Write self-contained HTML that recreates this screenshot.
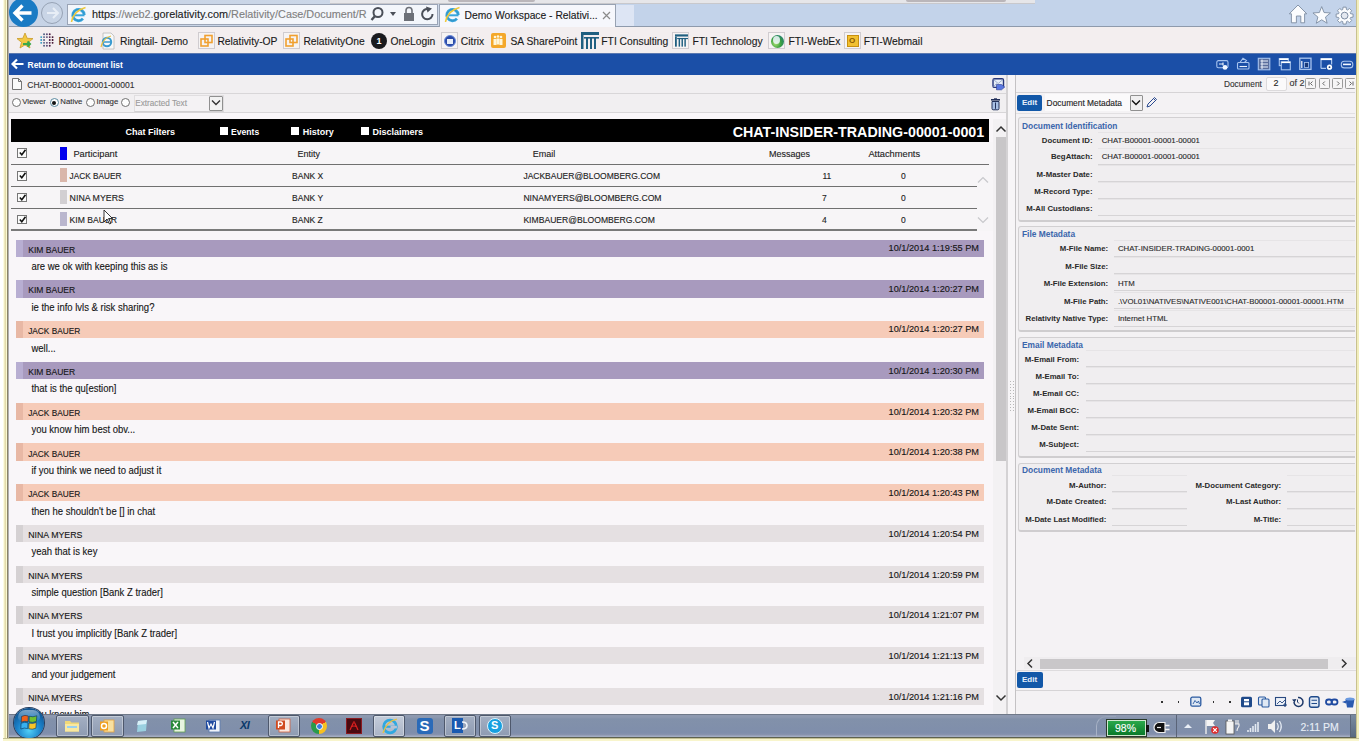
<!DOCTYPE html>
<html><head><meta charset="utf-8">
<style>
*{box-sizing:border-box;margin:0;padding:0}
html,body{width:1366px;height:743px;overflow:hidden;background:#fff}
body{position:relative;font-family:"Liberation Sans",sans-serif;color:#222}
.a{position:absolute}
.t{position:absolute;white-space:nowrap;line-height:1;-webkit-text-stroke:0.12px currentColor}
.t[style*="bold"]{-webkit-text-stroke:0}
.sy .t{transform:translateY(-0.4px) scaleY(1.07);transform-origin:50% 48%}
/* window borders */
#bl1{left:3px;top:0;width:1px;height:740px;background:#fdfce2}
#bl2{left:4px;top:0;width:1px;height:740px;background:#eee8c0}
#bl3{left:5px;top:0;width:1px;height:740px;background:#e2dbaa}
#bl4{left:6px;top:0;width:1px;height:740px;background:#fbfad4}
#bl5{left:7px;top:0;width:1px;height:739px;background:#8a8268}
#bl6{left:8px;top:0;width:1px;height:739px;background:#b0b0b0}
#br1{left:1356px;top:0;width:1px;height:740px;background:#c8c090}
#br2{left:1357px;top:0;width:2px;height:740px;background:#f2eebc}
#bb1{left:3px;top:738px;width:1356px;height:1px;background:#c4c094}
#bb2{left:3px;top:739px;width:1356px;height:2px;background:#f8f5cc}
#scr{left:0;top:0;width:1356px;height:738px;overflow:hidden;clip-path:inset(0 0 0 9px);background:#f9f6f9}
</style></head><body>
<div id="bl1" class="a"></div><div id="bl2" class="a"></div><div id="bl3" class="a"></div><div id="bl4" class="a"></div><div id="bl5" class="a"></div><div id="bl6" class="a"></div>
<div id="br1" class="a"></div><div id="br2" class="a"></div>
<div id="bb1" class="a"></div><div id="bb2" class="a"></div>
<div id="scr" class="a">

<!-- top strip & toolbar -->
<div class="a" style="left:0;top:0;width:1356px;height:26px;background:#c3d3ea"></div>
<div class="a" style="left:0;top:0;width:440px;height:26px;background:linear-gradient(90deg,#c6d3e6,#cdd8e8)"></div>
<div class="a" style="left:330px;top:0;width:705px;height:4px;background:#e6e6e9;border-bottom:1px solid #c8c8cc"></div>
<div class="a" style="left:447.6px;top:0;width:87px;height:1.8px;background:#bab6ba;border-radius:0 0 2px 2px"></div>
<div class="a" style="left:905.7px;top:0;width:100px;height:1.8px;background:#bab6ba;border-radius:0 0 2px 2px"></div>
<div class="a" style="left:0;top:26px;width:1356px;height:1px;background:#8e9aac"></div>
<!-- back button -->
<div class="a" style="left:9px;top:-2px;width:29px;height:29px;border-radius:50%;background:#1a7bc4"></div>
<svg class="a" style="left:12px;top:3px" width="22" height="20" viewBox="0 0 22 20"><path d="M10.5 2.5 L3 10 L10.5 17.5 M3.5 10 H19.5" stroke="#fff" stroke-width="3.4" fill="none" stroke-linejoin="miter"/></svg>
<!-- forward button -->
<div class="a" style="left:41px;top:2px;width:22px;height:22px;border-radius:50%;border:1px solid #97a3b5;background:#c9d5e6"></div>
<svg class="a" style="left:45px;top:6px" width="15" height="14" viewBox="0 0 15 14"><path d="M8 2 L13 7 L8 12 M13 7 H2" stroke="#e8eef6" stroke-width="2" fill="none"/></svg>
<!-- address bar -->
<div class="a" style="left:67px;top:4px;width:371px;height:21px;background:#f3f6fb;border:1px solid #9aa4b6"></div>
<div class="t" style="left:92px;top:9px;font-size:10.85px;color:#808080"><span style="color:#222">https</span>://web2.<span style="color:#222">gorelativity.com</span>/Relativity/Case/Document/R</div>

<!-- IE icon in address -->
<svg class="a" style="left:70px;top:6px" width="17" height="17" viewBox="0 0 17 17"><path d="M14.2 9 A5.7 5.7 0 1 0 12.9 12.7" fill="none" stroke="#3aa6dc" stroke-width="2.9"/><path d="M14.2 9 A5.7 5.7 0 1 0 12.9 12.7" fill="none" stroke="#1f6a98" stroke-width="0.5" opacity="0.6"/><path d="M3.5 9.3 H14.5" stroke="#3aa6dc" stroke-width="2"/><path d="M1.5 16 Q3 5 15.5 1.5" stroke="#f0c838" stroke-width="1.5" fill="none"/></svg>
<!-- search / lock / refresh -->
<svg class="a" style="left:370px;top:6px" width="66" height="16" viewBox="0 0 66 16"><circle cx="8" cy="6.5" r="4.5" fill="none" stroke="#4a4f58" stroke-width="2"/><path d="M5 10 L1.5 14" stroke="#4a4f58" stroke-width="2.4"/><path d="M20 6 L26 6 L23 10 Z" fill="#4a4f58"/><rect x="34" y="7" width="10" height="8" fill="#6c7078"/><path d="M36 7.5 V4.5 A3 3 0 0 1 42 4.5 V7.5" fill="none" stroke="#6c7078" stroke-width="1.6"/><path d="M58 3 A5.2 5.2 0 1 0 62.5 8" fill="none" stroke="#4a4f58" stroke-width="2"/><path d="M56 0.5 L62 2.5 L57.5 6.5 Z" fill="#4a4f58"/></svg>
<!-- tab -->
<div class="a" style="left:439px;top:4px;width:177px;height:23px;background:#f6f7fc;border:1px solid #98a2b2;border-bottom:none"></div>
<div class="a" style="left:616px;top:5px;width:18px;height:21px;background:#dde5f4"></div>
<svg class="a" style="left:444px;top:6px" width="17" height="17" viewBox="0 0 17 17"><path d="M14.2 9 A5.7 5.7 0 1 0 12.9 12.7" fill="none" stroke="#3aa6dc" stroke-width="2.9"/><path d="M14.2 9 A5.7 5.7 0 1 0 12.9 12.7" fill="none" stroke="#1f6a98" stroke-width="0.5" opacity="0.6"/><path d="M3.5 9.3 H14.5" stroke="#3aa6dc" stroke-width="2"/><path d="M1.5 16 Q3 5 15.5 1.5" stroke="#f0c838" stroke-width="1.5" fill="none"/></svg>
<div class="t" style="left:464.6px;top:10.5px;font-size:10.3px;color:#1a1a1a">Demo Workspace - Relativi...</div>
<svg class="a" style="left:602px;top:11px" width="9" height="9" viewBox="0 0 9 9"><path d="M1 1 L8 8 M8 1 L1 8" stroke="#8a8a8a" stroke-width="1.2"/></svg>
<!-- home star gear -->
<svg class="a" style="left:1286px;top:2px" width="70" height="24" viewBox="0 0 70 24"><path d="M3.3 11.8 L12 3 L20.8 11.8 L18.6 11.8 V20.8 H14.8 V14 H10.4 V20.8 H5.4 V11.8 Z" fill="#fbfcfe" stroke="#7d8ca2" stroke-width="0.9" stroke-linejoin="round"/><path d="M35.70,4.60 L38.05,10.56 L44.45,10.96 L39.50,15.04 L41.11,21.24 L35.70,17.80 L30.29,21.24 L31.90,15.04 L26.95,10.96 L33.35,10.56 Z" fill="#fbfcfe" stroke="#7d8ca2" stroke-width="0.9" stroke-linejoin="round"/><path d="M64.62,11.74 L67.06,12.06 L67.06,15.14 L64.62,15.46 L64.17,16.54 L65.67,18.49 L63.49,20.67 L61.54,19.17 L60.46,19.62 L60.14,22.06 L57.06,22.06 L56.74,19.62 L55.66,19.17 L53.71,20.67 L51.53,18.49 L53.03,16.54 L52.58,15.46 L50.14,15.14 L50.14,12.06 L52.58,11.74 L53.03,10.66 L51.53,8.71 L53.71,6.53 L55.66,8.03 L56.74,7.58 L57.06,5.14 L60.14,5.14 L60.46,7.58 L61.54,8.03 L63.49,6.53 L65.67,8.71 L64.17,10.66 Z" fill="#fbfcfe" stroke="#7d8ca2" stroke-width="0.9" stroke-linejoin="round"/><circle cx="58.6" cy="13.6" r="3.4" fill="#e4e8f0" stroke="#7d8ca2" stroke-width="1"/></svg>
<!-- bookmarks bar -->
<div class="a" style="left:0;top:27px;width:1356px;height:26px;background:#f3eeef"></div>
<svg class="a" style="left:16px;top:32px" width="18" height="18" viewBox="0 0 18 18"><path d="M9 1 L11.2 6.3 L17 6.6 L12.5 10.3 L14 16 L9 12.9 L4 16 L5.5 10.3 L1 6.6 L6.8 6.3 Z" fill="#f2c842" stroke="#c99a2a" stroke-width="0.8"/><path d="M7 12 H14 M11.5 9.5 L14 12 L11.5 14.5" stroke="#3aa84a" stroke-width="2" fill="none"/></svg>
<svg class="a" style="left:40px;top:33.4px" width="14" height="14" viewBox="0 0 14 14"><circle cx="4.05" cy="1.20" r="0.95" fill="#4a5a80"/><circle cx="6.90" cy="1.20" r="0.95" fill="#5a4a78"/><circle cx="9.75" cy="1.20" r="0.95" fill="#4a1a40"/><circle cx="1.20" cy="4.08" r="0.95" fill="#2a98c0"/><circle cx="4.05" cy="4.08" r="0.95" fill="#4a5a80"/><circle cx="6.90" cy="4.08" r="0.95" fill="#5a4a78"/><circle cx="9.75" cy="4.08" r="0.95" fill="#4a1a40"/><circle cx="12.60" cy="4.08" r="0.95" fill="#3a0a28"/><circle cx="1.20" cy="6.96" r="0.95" fill="#2a98c0"/><circle cx="4.05" cy="6.96" r="0.95" fill="#4a5a80"/><circle cx="9.75" cy="6.96" r="0.95" fill="#4a1a40"/><circle cx="12.60" cy="6.96" r="0.95" fill="#3a0a28"/><circle cx="1.20" cy="9.84" r="0.95" fill="#2a98c0"/><circle cx="4.05" cy="9.84" r="0.95" fill="#4a5a80"/><circle cx="6.90" cy="9.84" r="0.95" fill="#5a4a78"/><circle cx="9.75" cy="9.84" r="0.95" fill="#4a1a40"/><circle cx="12.60" cy="9.84" r="0.95" fill="#3a0a28"/><circle cx="4.05" cy="12.72" r="0.95" fill="#4a5a80"/><circle cx="6.90" cy="12.72" r="0.95" fill="#5a4a78"/><circle cx="9.75" cy="12.72" r="0.95" fill="#4a1a40"/></svg>
<div class="t" style="left:58.5px;top:36.5px;font-size:10.3px;color:#1a1a1a">Ringtail</div>
<svg class="a" style="left:99px;top:32px" width="17" height="18" viewBox="0 0 17 18"><path d="M4 1 H12 L15 4 V17 H4 Z" fill="#f8f8f8" stroke="#b8b8b8" stroke-width="0.8"/><circle cx="8" cy="10" r="4.2" fill="none" stroke="#3a9ad0" stroke-width="2"/><path d="M4 10 H12" stroke="#3a9ad0" stroke-width="1.5"/><path d="M2 15 Q4 6 12 4" stroke="#e8c040" stroke-width="1.2" fill="none"/></svg>
<div class="t" style="left:120px;top:36.5px;font-size:10.3px;color:#1a1a1a">Ringtail- Demo</div>
<div class="a" style="left:197.5px;top:32px;width:17px;height:17px;border:1px solid #d0ccd0;background:#f6f3f3"></div>
<svg class="a" style="left:198.5px;top:33px" width="16" height="16" viewBox="0 0 16 16"><rect x="2" y="6" width="7" height="7" fill="none" stroke="#f0a030" stroke-width="1.6"/><rect x="6" y="2.5" width="7" height="7" fill="none" stroke="#f0a030" stroke-width="1.6"/></svg>
<div class="t" style="left:217.4px;top:36.5px;font-size:10.3px;color:#1a1a1a">Relativity-OP</div>
<div class="a" style="left:283px;top:32px;width:17px;height:17px;border:1px solid #d0ccd0;background:#f6f3f3"></div>
<svg class="a" style="left:284px;top:33px" width="16" height="16" viewBox="0 0 16 16"><rect x="2" y="6" width="7" height="7" fill="none" stroke="#f0a030" stroke-width="1.6"/><rect x="6" y="2.5" width="7" height="7" fill="none" stroke="#f0a030" stroke-width="1.6"/></svg>
<div class="t" style="left:303.4px;top:36.5px;font-size:10.3px;color:#1a1a1a">RelativityOne</div>
<div class="a" style="left:371px;top:33px;width:16px;height:16px;border-radius:50%;background:#1a1a1e"></div><div class="t" style="left:376.5px;top:37px;font-size:9px;font-weight:bold;color:#fff">1</div>
<div class="t" style="left:390.5px;top:36.5px;font-size:10.3px;color:#1a1a1a">OneLogin</div>
<div class="a" style="left:441px;top:32px;width:17px;height:17px;border:1px solid #d0ccd0;background:#f6f3f3"></div>
<div class="a" style="left:443.5px;top:35px;width:12px;height:12px;border-radius:50%;background:#2a4aa8;border:1px solid #6a8ad8"></div><div class="a" style="left:446.5px;top:38.5px;width:6px;height:5px;background:#e8eef8"></div>
<div class="t" style="left:460.8px;top:36.5px;font-size:10.3px;color:#1a1a1a">Citrix</div>
<div class="a" style="left:490.5px;top:32.5px;width:15px;height:15px;border-radius:2px;background:#f4a82a"></div><svg class="a" style="left:492px;top:34px" width="12" height="12" viewBox="0 0 12 12"><circle cx="3" cy="3" r="1.3" fill="#fff6d8"/><circle cx="9" cy="3" r="1.3" fill="#fff6d8"/><circle cx="6" cy="2.5" r="1.3" fill="#fff6d8"/><rect x="1.5" y="5" width="3" height="6" fill="#fff6d8"/><rect x="7.5" y="5" width="3" height="6" fill="#fff6d8"/><rect x="4.5" y="4.5" width="3" height="6" fill="#fff6d8"/></svg>
<div class="t" style="left:510.4px;top:36.5px;font-size:10.3px;color:#1a1a1a">SA SharePoint</div>
<svg class="a" style="left:581.4px;top:32px" width="18" height="17" viewBox="0 0 18 17"><rect x="0" y="0" width="18" height="3" fill="#1f5f80"/><rect x="0" y="3" width="2.5" height="14" fill="#1f5f80"/><rect x="5" y="5" width="2" height="12" fill="#1f5f80"/><rect x="9" y="5" width="2" height="12" fill="#1f5f80"/><rect x="13" y="5" width="2" height="12" fill="#1f5f80"/><rect x="3" y="5" width="15" height="1.6" fill="#1f5f80"/></svg>
<div class="t" style="left:601.3px;top:36.5px;font-size:10.3px;color:#1a1a1a">FTI Consulting</div>
<div class="a" style="left:672px;top:32px;width:17px;height:17px;border:1px solid #d0ccd0;background:#f6f3f3"></div>
<svg class="a" style="left:674.5px;top:32px" width="13" height="17" viewBox="0 0 18 17"><rect x="0" y="0" width="18" height="3" fill="#1f5f80"/><rect x="0" y="3" width="2.5" height="14" fill="#1f5f80"/><rect x="5" y="5" width="2" height="12" fill="#1f5f80"/><rect x="9" y="5" width="2" height="12" fill="#1f5f80"/><rect x="13" y="5" width="2" height="12" fill="#1f5f80"/><rect x="3" y="5" width="15" height="1.6" fill="#1f5f80"/></svg>
<div class="t" style="left:692.4px;top:36.5px;font-size:10.3px;color:#1a1a1a">FTI Technology</div>
<div class="a" style="left:768px;top:32px;width:17px;height:17px;border:1px solid #d0ccd0;background:#f6f3f3"></div>
<div class="a" style="left:770.5px;top:34.5px;width:13px;height:13px;border-radius:50%;background:radial-gradient(circle at 35% 65%,#a8e070 0,#3aa040 45%,#1a6a8a 100%)"></div><div class="a" style="left:773px;top:36px;width:7px;height:8px;border-radius:50%;background:rgba(240,248,255,0.85)"></div>
<div class="t" style="left:788.5px;top:36.5px;font-size:10.3px;color:#1a1a1a">FTI-WebEx</div>
<div class="a" style="left:844px;top:32px;width:17px;height:17px;border:1px solid #d0ccd0;background:#f6f3f3"></div>
<div class="a" style="left:846.5px;top:34.5px;width:12px;height:12px;background:#f2c030;border:1px solid #c89010"></div><div class="t" style="left:849px;top:36.5px;font-size:8px;font-weight:bold;color:#8a5a00">O</div>
<div class="t" style="left:863.7px;top:36.5px;font-size:10.3px;color:#1a1a1a">FTI-Webmail</div>
<!--CHROME-->

<!-- blue bar -->
<div class="a" style="left:0;top:53px;width:1356px;height:1px;background:#5a78b0"></div>
<div class="a" style="left:0;top:54px;width:1356px;height:21px;background:#1b4fa7"></div>
<svg class="a" style="left:11px;top:58px" width="13" height="12" viewBox="0 0 13 12"><path d="M6 1.5 L1.5 6 L6 10.5 M2 6 H12.5" stroke="#fff" stroke-width="2.2" fill="none"/></svg>
<div class="t" style="left:27.5px;top:61.20px;font-size:8.5px;font-weight:bold;color:#fff">Return to document list</div>
<!-- blue bar icons right -->
<svg class="a" style="left:1210px;top:54px" width="146" height="20" viewBox="0 0 146 20">
<g fill="none" stroke="#a8c4ee" stroke-width="1.1">
<rect x="6.8" y="6.6" width="11.2" height="7.2" rx="1.6"/>
<path d="M9 10 H13 M13 8.5 V11.5" stroke="#e8f0fc" stroke-width="1.2"/>
<circle cx="15" cy="13.4" r="2.4" fill="#f0f6ff" stroke="none"/>
<rect x="27.5" y="8.5" width="11.5" height="6.5" rx="1"/>
<path d="M29.5 12.5 H37" stroke="#e8f0fc"/>
<path d="M30 8.5 L33 4.2 L36.5 6.5 L34.5 8.5" />
<rect x="48.3" y="4.3" width="11.5" height="11.5" fill="#5a6e9c"/>
<path d="M50.5 7 H58 M50.5 10 H58 M50.5 13 H58 M52 5.5 V15" stroke="#eef4fc" stroke-width="1"/>
<rect x="69.3" y="4.6" width="9" height="7"/>
<path d="M69.3 5.2 H78.3" stroke="#ffffff" stroke-width="1.6"/>
<rect x="71.3" y="7.8" width="9" height="8" fill="#1b4fa7"/>
<path d="M71.3 8.4 H80.3" stroke="#ffffff" stroke-width="1.4"/>
<rect x="89.8" y="4.2" width="11.2" height="11.2" stroke-width="1.3"/>
<rect x="94.4" y="8.5" width="4.2" height="5" fill="#1a3a78" stroke="#a8c4ee" stroke-width="0.8"/>
<path d="M91.8 7 V14" stroke="#f4f8ff" stroke-width="1.2"/>
<path d="M111 14.4 V4.8 H121.6 V10.5 M111 14.4 H116" stroke-width="1.2"/>
<path d="M110.8 5.2 H121.8" stroke="#ffffff" stroke-width="1.8"/>
<circle cx="119.5" cy="13.2" r="2.6" fill="#ffffff" stroke="none"/>
<circle cx="119.5" cy="13.2" r="0.9" fill="#1a3a78" stroke="none"/>
<rect x="131.3" y="7.3" width="11.5" height="6.6" rx="3"/>
<path d="M133 10.4 H141" stroke="#f4f8ff" stroke-width="1.6"/>
</g>
</svg>
<!-- left doc row -->
<div class="a" style="left:9px;top:75px;width:998px;height:18px;background:#f1eff1"></div>
<div class="a" style="left:9px;top:93px;width:998px;height:1px;background:#d8d6d8"></div>
<svg class="a" style="left:12px;top:78px" width="10" height="12" viewBox="0 0 10 12"><path d="M0.5 0.5 H6.5 L9.5 3.5 V11.5 H0.5 Z M6.5 0.5 V3.5 H9.5" fill="#fafafa" stroke="#666" stroke-width="0.9"/></svg>
<div class="t" style="left:27.3px;top:80.5px;font-size:8.5px;color:#333">CHAT-B00001-00001-00001</div>
<!-- radio row -->
<div class="a" style="left:9px;top:94px;width:998px;height:19px;background:#f1eff1"></div>
<div class="a" style="left:9px;top:112px;width:998px;height:1px;background:#d8d6d8"></div>
<div class="a" style="left:12px;top:98px;width:9px;height:9px;border-radius:50%;border:1px solid #707070;background:#fdfdfd"></div>
<div class="t" style="left:22.2px;top:97.5px;font-size:7.8px;color:#333">Viewer</div>
<div class="a" style="left:49.5px;top:98px;width:9px;height:9px;border-radius:50%;border:1px solid #5a8aa0;background:#fdfdfd"></div>
<div class="a" style="left:52px;top:100.5px;width:4px;height:4px;border-radius:50%;background:#111"></div>
<div class="t" style="left:60.3px;top:97.5px;font-size:7.8px;color:#333">Native</div>
<div class="a" style="left:85.6px;top:98px;width:9px;height:9px;border-radius:50%;border:1px solid #707070;background:#fdfdfd"></div>
<div class="t" style="left:96.6px;top:97.5px;font-size:7.8px;color:#333">Image</div>
<div class="a" style="left:120.7px;top:98px;width:9px;height:9px;border-radius:50%;border:1px solid #707070;background:#fdfdfd"></div>
<div class="a" style="left:133.5px;top:94.5px;width:90px;height:17.5px;background:#f4f2f4;border:1px solid #e0dee0;border-bottom-color:#d2d0d2"></div>
<div class="t" style="left:135.2px;top:100px;font-size:8.2px;color:#9a9a9a">Extracted Text</div>
<div class="a" style="left:209px;top:95.5px;width:14px;height:15px;border:1px solid #909090;background:#f2f2f2;border-radius:1px"></div>
<svg class="a" style="left:211px;top:99px" width="10" height="7" viewBox="0 0 10 7"><path d="M1 1.5 L5 5.5 L9 1.5" stroke="#333" stroke-width="1.4" fill="none"/></svg>
<!-- left icons -->
<svg class="a" style="left:991px;top:77px" width="15" height="14" viewBox="0 0 15 14"><rect x="2" y="1.8" width="10.5" height="8.6" rx="1.5" fill="#e8eef8" stroke="#26367a" stroke-width="1.4"/><path d="M2.5 2.5 L7.2 6.5 L12 2.5 M2.5 9.8 L5.5 6.5" stroke="#8aa0c0" stroke-width="0.8" fill="none"/><path d="M5.5 7.5 H10.5 L13.8 10 L10.5 12.8 H5.5 Z" fill="#5a78e0" stroke="#2a3a90" stroke-width="0.6"/></svg>
<svg class="a" style="left:990px;top:98px" width="11" height="13" viewBox="0 0 11 13"><path d="M1 1.8 H10" stroke="#22305a" stroke-width="1.6"/><path d="M4 0.8 H7" stroke="#22305a" stroke-width="1"/><path d="M2 3.5 H9 V10.5 Q9 11.8 7.8 11.8 H3.2 Q2 11.8 2 10.5 Z" fill="#a8c0e4" stroke="#22305a" stroke-width="1"/><path d="M5.5 4.5 V10.8" stroke="#22305a" stroke-width="1"/></svg>
<!-- separator between panels -->
<div class="a" style="left:1006px;top:75px;width:2px;height:639px;background:#d4d2d4"></div>
<div class="a" style="left:1008px;top:75px;width:7px;height:639px;background:#f7f5f7"></div>
<div class="a" style="left:1015px;top:75px;width:1px;height:639px;background:#c4c2c4"></div>

<!-- black bar -->
<div class="a" style="left:11px;top:119px;width:978px;height:23px;background:#000"></div>
<div class="t" style="left:125.6px;top:128.30px;font-size:9px;font-weight:bold;color:#fff">Chat Filters</div>
<div class="a" style="left:220px;top:126.6px;width:8px;height:8px;background:#fff"></div>
<div class="t" style="left:231px;top:128.30px;font-size:8.6px;font-weight:bold;color:#fff">Events</div>
<div class="a" style="left:291px;top:126.6px;width:8px;height:8px;background:#fff"></div>
<div class="t" style="left:302.7px;top:128.30px;font-size:9px;font-weight:bold;color:#fff">History</div>
<div class="a" style="left:361px;top:126.6px;width:8px;height:8px;background:#fff"></div>
<div class="t" style="left:372.4px;top:128.30px;font-size:9px;font-weight:bold;color:#fff">Disclaimers</div>
<div class="t" style="left:732.7px;top:124.5px;font-size:14.3px;font-weight:bold;color:#fff">CHAT-INSIDER-TRADING-00001-0001</div>
<!-- table -->
<div class="a" style="left:9px;top:142px;width:984px;height:89px;background:#f7f5f7"></div>
<div class="a" style="left:11px;top:164px;width:978px;height:1.4px;background:#707070"></div>
<div class="a" style="left:11px;top:186px;width:966px;height:1.4px;background:#707070"></div>
<div class="a" style="left:11px;top:207.5px;width:966px;height:1.4px;background:#707070"></div>
<div class="a" style="left:11px;top:229.2px;width:966px;height:1.4px;background:#7a7a7a"></div>
<div class="a" style="left:60px;top:146.5px;width:7.2px;height:13.7px;background:#0000ee"></div>
<div class="a" style="left:60px;top:168.3px;width:7.2px;height:13.5px;background:#d9b6aa"></div>
<div class="a" style="left:60px;top:190.2px;width:7.2px;height:13.5px;background:#d2cfd2"></div>
<div class="a" style="left:60px;top:212px;width:7.2px;height:13.5px;background:#bab6ce"></div>
<div class="t" style="left:73.4px;top:149.7px;font-size:9.3px;color:#222">Participant</div>
<div class="t" style="left:297.4px;top:149.7px;font-size:9px;color:#222">Entity</div>
<div class="t" style="left:532.8px;top:149.7px;font-size:9px;color:#222">Email</div>
<div class="t" style="left:769px;top:149.7px;font-size:9px;color:#222">Messages</div>
<div class="t" style="left:868.4px;top:149.7px;font-size:9.3px;color:#222">Attachments</div>
<div class="a" style="left:17.2px;top:148.3px;width:9.5px;height:9.5px;border:1px solid #777;background:#fbfbfb"></div><svg class="a" style="left:18.7px;top:149.3px" width="7" height="7" viewBox="0 0 7 7"><path d="M0.8 3.5 L2.8 5.8 L6.5 0.8" stroke="#111" stroke-width="1.5" fill="none"/></svg>
<div class="a" style="left:17.2px;top:171.0px;width:9.5px;height:9.5px;border:1px solid #777;background:#fbfbfb"></div><svg class="a" style="left:18.7px;top:172.0px" width="7" height="7" viewBox="0 0 7 7"><path d="M0.8 3.5 L2.8 5.8 L6.5 0.8" stroke="#111" stroke-width="1.5" fill="none"/></svg>
<div class="t" style="left:69.6px;top:172.57px;font-size:8.25px;color:#222">JACK BAUER</div>
<div class="t" style="left:292.1px;top:171.80px;font-size:8.5px;color:#222">BANK X</div>
<div class="t" style="left:523.4px;top:171.80px;font-size:8.5px;color:#222">JACKBAUER@BLOOMBERG.COM</div>
<div class="t" style="left:822.5px;top:171.80px;font-size:8.5px;color:#222">11</div>
<div class="t" style="left:901px;top:171.80px;font-size:8.5px;color:#222">0</div>
<div class="a" style="left:17.2px;top:192.9px;width:9.5px;height:9.5px;border:1px solid #777;background:#fbfbfb"></div><svg class="a" style="left:18.7px;top:193.9px" width="7" height="7" viewBox="0 0 7 7"><path d="M0.8 3.5 L2.8 5.8 L6.5 0.8" stroke="#111" stroke-width="1.5" fill="none"/></svg>
<div class="t" style="left:69.6px;top:194.21px;font-size:8.8px;color:#222">NINA MYERS</div>
<div class="t" style="left:292.1px;top:194.40px;font-size:8.5px;color:#222">BANK Y</div>
<div class="t" style="left:523.4px;top:194.40px;font-size:8.65px;color:#222">NINAMYERS@BLOOMBERG.COM</div>
<div class="t" style="left:822px;top:194.40px;font-size:8.5px;color:#222">7</div>
<div class="t" style="left:901px;top:194.40px;font-size:8.5px;color:#222">0</div>
<div class="a" style="left:17.2px;top:214.79999999999998px;width:9.5px;height:9.5px;border:1px solid #777;background:#fbfbfb"></div><svg class="a" style="left:18.7px;top:215.79999999999998px" width="7" height="7" viewBox="0 0 7 7"><path d="M0.8 3.5 L2.8 5.8 L6.5 0.8" stroke="#111" stroke-width="1.5" fill="none"/></svg>
<div class="t" style="left:69.6px;top:215.90px;font-size:8.6px;color:#222">KIM BAUER</div>
<div class="t" style="left:292.1px;top:216.00px;font-size:8.5px;color:#222">BANK Z</div>
<div class="t" style="left:523.4px;top:216.00px;font-size:8.6px;color:#222">KIMBAUER@BLOOMBERG.COM</div>
<div class="t" style="left:822px;top:216.00px;font-size:8.5px;color:#222">4</div>
<div class="t" style="left:901px;top:216.00px;font-size:8.5px;color:#222">0</div>
<svg class="a" style="left:977px;top:176px" width="12" height="8" viewBox="0 0 12 8"><path d="M1 6.5 L6 1.5 L11 6.5" stroke="#c8c8cc" stroke-width="1.2" fill="none"/></svg>
<svg class="a" style="left:977px;top:216px" width="12" height="8" viewBox="0 0 12 8"><path d="M1 1.5 L6 6.5 L11 1.5" stroke="#c8c8cc" stroke-width="1.2" fill="none"/></svg>
<svg class="a" style="left:103px;top:208.5px" width="10" height="16" viewBox="0 0 10 16"><path d="M1 1 V13 L4 10 L6.5 15 L8 14.3 L5.5 9.5 H9.5 Z" fill="#fff" stroke="#222" stroke-width="0.9"/></svg>
<!-- chat -->
<div class="a sy" style="left:9px;top:231px;width:984px;height:483px;background:#f9f6f9;overflow:hidden">
<div class="a" style="left:7px;top:8.50px;width:968px;height:17.4px;background:#a89abe"></div><div class="a" style="left:7px;top:8.50px;width:7px;height:17.4px;background:#b8aed2"></div>
<div class="t" style="left:19.2px;top:14.68px;font-size:8.55px;color:#161616">KIM BAUER</div><div class="t" style="right:14px;top:12.97px;font-size:9.2px;color:#161616">10/1/2014 1:19:55 PM</div>
<div class="t" style="left:22.4px;top:31.12px;font-size:9.5px;color:#161616">are we ok with keeping this as is</div>
<div class="a" style="left:7px;top:49.25px;width:968px;height:17.4px;background:#a89abe"></div><div class="a" style="left:7px;top:49.25px;width:7px;height:17.4px;background:#b8aed2"></div>
<div class="t" style="left:19.2px;top:55.43px;font-size:8.55px;color:#161616">KIM BAUER</div><div class="t" style="right:14px;top:53.72px;font-size:9.2px;color:#161616">10/1/2014 1:20:27 PM</div>
<div class="t" style="left:22.4px;top:71.87px;font-size:9.5px;color:#161616">ie the info lvls &amp; risk sharing?</div>
<div class="a" style="left:7px;top:90.00px;width:968px;height:17.4px;background:#f6cbb8"></div><div class="a" style="left:7px;top:90.00px;width:7px;height:17.4px;background:#e8b8a5"></div>
<div class="t" style="left:19.2px;top:96.30px;font-size:8.3px;color:#161616">JACK BAUER</div><div class="t" style="right:14px;top:94.47px;font-size:9.2px;color:#161616">10/1/2014 1:20:27 PM</div>
<div class="t" style="left:22.4px;top:112.62px;font-size:9.5px;color:#161616">well...</div>
<div class="a" style="left:7px;top:130.75px;width:968px;height:17.4px;background:#a89abe"></div><div class="a" style="left:7px;top:130.75px;width:7px;height:17.4px;background:#b8aed2"></div>
<div class="t" style="left:19.2px;top:136.93px;font-size:8.55px;color:#161616">KIM BAUER</div><div class="t" style="right:14px;top:135.92px;font-size:9.2px;color:#161616">10/1/2014 1:20:30 PM</div>
<div class="t" style="left:22.4px;top:153.37px;font-size:9.5px;color:#161616">that is the qu[estion]</div>
<div class="a" style="left:7px;top:171.50px;width:968px;height:17.4px;background:#f6cbb8"></div><div class="a" style="left:7px;top:171.50px;width:7px;height:17.4px;background:#e8b8a5"></div>
<div class="t" style="left:19.2px;top:177.80px;font-size:8.3px;color:#161616">JACK BAUER</div><div class="t" style="right:14px;top:176.67px;font-size:9.2px;color:#161616">10/1/2014 1:20:32 PM</div>
<div class="t" style="left:22.4px;top:194.12px;font-size:9.5px;color:#161616">you know him best obv...</div>
<div class="a" style="left:7px;top:212.25px;width:968px;height:17.4px;background:#f6cbb8"></div><div class="a" style="left:7px;top:212.25px;width:7px;height:17.4px;background:#e8b8a5"></div>
<div class="t" style="left:19.2px;top:218.55px;font-size:8.3px;color:#161616">JACK BAUER</div><div class="t" style="right:14px;top:217.42px;font-size:9.2px;color:#161616">10/1/2014 1:20:38 PM</div>
<div class="t" style="left:22.4px;top:234.87px;font-size:9.5px;color:#161616">if you think we need to adjust it</div>
<div class="a" style="left:7px;top:253.00px;width:968px;height:17.4px;background:#f6cbb8"></div><div class="a" style="left:7px;top:253.00px;width:7px;height:17.4px;background:#e8b8a5"></div>
<div class="t" style="left:19.2px;top:259.30px;font-size:8.3px;color:#161616">JACK BAUER</div><div class="t" style="right:14px;top:258.17px;font-size:9.2px;color:#161616">10/1/2014 1:20:43 PM</div>
<div class="t" style="left:22.4px;top:275.62px;font-size:9.5px;color:#161616">then he shouldn't be [] in chat</div>
<div class="a" style="left:7px;top:293.75px;width:968px;height:17.4px;background:#e5e0e2"></div><div class="a" style="left:7px;top:293.75px;width:7px;height:17.4px;background:#d5d1d3"></div>
<div class="t" style="left:19.2px;top:299.81px;font-size:8.8px;color:#161616">NINA MYERS</div><div class="t" style="right:14px;top:298.92px;font-size:9.2px;color:#161616">10/1/2014 1:20:54 PM</div>
<div class="t" style="left:22.4px;top:316.37px;font-size:9.5px;color:#161616">yeah that is key</div>
<div class="a" style="left:7px;top:334.50px;width:968px;height:17.4px;background:#e5e0e2"></div><div class="a" style="left:7px;top:334.50px;width:7px;height:17.4px;background:#d5d1d3"></div>
<div class="t" style="left:19.2px;top:340.56px;font-size:8.8px;color:#161616">NINA MYERS</div><div class="t" style="right:14px;top:339.67px;font-size:9.2px;color:#161616">10/1/2014 1:20:59 PM</div>
<div class="t" style="left:22.4px;top:357.12px;font-size:9.5px;color:#161616">simple question [Bank Z trader]</div>
<div class="a" style="left:7px;top:375.25px;width:968px;height:17.4px;background:#e5e0e2"></div><div class="a" style="left:7px;top:375.25px;width:7px;height:17.4px;background:#d5d1d3"></div>
<div class="t" style="left:19.2px;top:381.31px;font-size:8.8px;color:#161616">NINA MYERS</div><div class="t" style="right:14px;top:380.42px;font-size:9.2px;color:#161616">10/1/2014 1:21:07 PM</div>
<div class="t" style="left:22.4px;top:397.87px;font-size:9.5px;color:#161616">I trust you implicitly [Bank Z trader]</div>
<div class="a" style="left:7px;top:416.00px;width:968px;height:17.4px;background:#e5e0e2"></div><div class="a" style="left:7px;top:416.00px;width:7px;height:17.4px;background:#d5d1d3"></div>
<div class="t" style="left:19.2px;top:422.06px;font-size:8.8px;color:#161616">NINA MYERS</div><div class="t" style="right:14px;top:421.17px;font-size:9.2px;color:#161616">10/1/2014 1:21:13 PM</div>
<div class="t" style="left:22.4px;top:438.62px;font-size:9.5px;color:#161616">and your judgement</div>
<div class="a" style="left:7px;top:456.75px;width:968px;height:17.4px;background:#e5e0e2"></div><div class="a" style="left:7px;top:456.75px;width:7px;height:17.4px;background:#d5d1d3"></div>
<div class="t" style="left:19.2px;top:462.81px;font-size:8.8px;color:#161616">NINA MYERS</div><div class="t" style="right:14px;top:461.92px;font-size:9.2px;color:#161616">10/1/2014 1:21:16 PM</div>
<div class="t" style="left:22.4px;top:479.37px;font-size:9.5px;color:#161616">you know him</div>
</div>
<div class="a" style="left:993px;top:119px;width:13px;height:595px;background:#f3f1f3"></div>
<div class="a" style="left:996px;top:136.8px;width:10px;height:324px;background:#c8c6c8"></div>
<svg class="a" style="left:994.5px;top:124.5px" width="12" height="8" viewBox="0 0 12 8"><path d="M1.5 6.5 L6 2 L10.5 6.5" stroke="#333" stroke-width="1.5" fill="none"/></svg>
<svg class="a" style="left:994.5px;top:694px" width="12" height="8" viewBox="0 0 12 8"><path d="M1.5 1.5 L6 6 L10.5 1.5" stroke="#333" stroke-width="1.5" fill="none"/></svg>
<!--LEFT-->

<!-- right panel -->
<div class="a" style="left:1016px;top:75px;width:340px;height:639px;background:#f4f2f4"></div>
<div class="a" style="left:1016px;top:92px;width:340px;height:1px;background:#d6d4d6"></div>
<div class="t" style="left:1224px;top:79.6px;font-size:8.3px;color:#333">Document</div>
<div class="a" style="left:1265.6px;top:76.6px;width:21.6px;height:14.6px;background:#fbfafb;border:1px solid #dcdadc;border-radius:2px"></div>
<div class="t" style="left:1273.5px;top:79.3px;font-size:9px;color:#222">2</div>
<div class="t" style="left:1289.6px;top:79.3px;font-size:9px;color:#333">of 2</div>
<div class="a" style="left:1305.4px;top:77.5px;width:11px;height:11px;border:1px solid #9a9a9a;border-radius:1.5px;background:#f6f5f6"></div><svg class="a" style="left:1305.9px;top:77.5px" width="10" height="11" viewBox="0 0 10 11"><path d="M3 3.5 V7.5 M6.5 3.5 L4.5 5.5 L6.5 7.5" stroke="#666" stroke-width="1" fill="none"/></svg>
<div class="a" style="left:1318.5px;top:77.5px;width:11px;height:11px;border:1px solid #9a9a9a;border-radius:1.5px;background:#f6f5f6"></div><svg class="a" style="left:1319.0px;top:77.5px" width="10" height="11" viewBox="0 0 10 11"><path d="M5.8 3.5 L3.8 5.5 L5.8 7.5" stroke="#666" stroke-width="1" fill="none"/></svg>
<div class="a" style="left:1332px;top:77.5px;width:11px;height:11px;border:1px solid #9a9a9a;border-radius:1.5px;background:#f6f5f6"></div><svg class="a" style="left:1332.5px;top:77.5px" width="10" height="11" viewBox="0 0 10 11"><path d="M4.2 3.5 L6.2 5.5 L4.2 7.5" stroke="#666" stroke-width="1" fill="none"/></svg>
<div class="a" style="left:1345px;top:77.5px;width:11px;height:11px;border:1px solid #9a9a9a;border-radius:1.5px;background:#f6f5f6"></div><svg class="a" style="left:1345.5px;top:77.5px" width="10" height="11" viewBox="0 0 10 11"><path d="M3.5 3.5 L5.5 5.5 L3.5 7.5 M7 3.5 V7.5" stroke="#666" stroke-width="1" fill="none"/></svg>

<div class="a" style="left:1016px;top:113px;width:340px;height:1px;background:#e2e0e2"></div>
<div class="a" style="left:1017px;top:94.5px;width:25.3px;height:16px;background:#1258a8;border-radius:2px"></div>
<div class="t" style="left:1022px;top:98.6px;font-size:8px;font-weight:bold;color:#e8f0fa">Edit</div>
<div class="a" style="left:1044.7px;top:94px;width:85px;height:17px;background:#fbfafb"></div>
<div class="t" style="left:1046.6px;top:98.5px;font-size:8.4px;color:#222">Document Metadata</div>
<div class="a" style="left:1129.8px;top:95px;width:12.8px;height:16px;border:1px solid #909090;background:#f0eff0;border-radius:1px"></div>
<svg class="a" style="left:1131px;top:99px" width="10" height="7" viewBox="0 0 10 7"><path d="M1 1.5 L5 5.5 L9 1.5" stroke="#111" stroke-width="1.4" fill="none"/></svg>
<svg class="a" style="left:1145px;top:96px" width="13" height="13" viewBox="0 0 13 13"><path d="M2 11 L3 8 L9.5 1.5 L11.5 3.5 L5 10 Z M8.5 2.5 L10.5 4.5" fill="none" stroke="#2a4a90" stroke-width="1"/></svg>
<div class="a" style="left:1018.3px;top:117px;width:340px;height:105px;background:#f0eef0;border:1px solid #d2d0d2;border-bottom:2px solid #cfcdcf;border-radius:3px"></div>
<div class="t" style="left:1022px;top:121.70px;font-size:8.4px;font-weight:bold;color:#3b66ac">Document Identification</div>
<div class="a" style="left:1098px;top:132.3px;width:258px;height:1px;background:#e6e4e6"></div><div class="a" style="left:1098px;top:148.3px;width:258px;height:1px;background:#d6d4d6"></div>
<div class="t" style="right:263.5px;top:137.10px;font-size:7.8px;font-weight:bold;color:#2a2a2a">Document ID:</div>
<div class="t" style="left:1101.7px;top:137.10px;font-size:7.8px;color:#2a2a2a">CHAT-B00001-00001-00001</div>
<div class="a" style="left:1098px;top:148.4px;width:258px;height:1px;background:#e6e4e6"></div><div class="a" style="left:1098px;top:164.4px;width:258px;height:1px;background:#d6d4d6"></div>
<div class="t" style="right:263.5px;top:153.20px;font-size:7.8px;font-weight:bold;color:#2a2a2a">BegAttach:</div>
<div class="t" style="left:1101.7px;top:153.20px;font-size:7.8px;color:#2a2a2a">CHAT-B00001-00001-00001</div>
<div class="a" style="left:1098px;top:165.3px;width:258px;height:1px;background:#e6e4e6"></div><div class="a" style="left:1098px;top:181.3px;width:258px;height:1px;background:#d6d4d6"></div>
<div class="t" style="right:263.5px;top:170.70px;font-size:7.8px;font-weight:bold;color:#2a2a2a">M-Master Date:</div>
<div class="a" style="left:1098px;top:182.2px;width:258px;height:1px;background:#e6e4e6"></div><div class="a" style="left:1098px;top:198.2px;width:258px;height:1px;background:#d6d4d6"></div>
<div class="t" style="right:263.5px;top:187.50px;font-size:7.8px;font-weight:bold;color:#2a2a2a">M-Record Type:</div>
<div class="a" style="left:1098px;top:198.8px;width:258px;height:1px;background:#e6e4e6"></div><div class="a" style="left:1098px;top:214.8px;width:258px;height:1px;background:#d6d4d6"></div>
<div class="t" style="right:263.5px;top:204.70px;font-size:7.8px;font-weight:bold;color:#2a2a2a">M-All Custodians:</div>
<div class="a" style="left:1018.3px;top:226px;width:340px;height:106px;background:#f0eef0;border:1px solid #d2d0d2;border-bottom:2px solid #cfcdcf;border-radius:3px"></div>
<div class="t" style="left:1022px;top:230.30px;font-size:8.4px;font-weight:bold;color:#3b66ac">File Metadata</div>
<div class="a" style="left:1113.7px;top:240.2px;width:243px;height:1px;background:#e6e4e6"></div><div class="a" style="left:1113.7px;top:256.2px;width:243px;height:1px;background:#d6d4d6"></div>
<div class="t" style="right:247.8px;top:245.30px;font-size:7.8px;font-weight:bold;color:#2a2a2a">M-File Name:</div>
<div class="t" style="left:1117.9px;top:245.30px;font-size:7.8px;color:#2a2a2a">CHAT-INSIDER-TRADING-00001-0001</div>
<div class="a" style="left:1113.7px;top:257.3px;width:243px;height:1px;background:#e6e4e6"></div><div class="a" style="left:1113.7px;top:273.3px;width:243px;height:1px;background:#d6d4d6"></div>
<div class="t" style="right:247.8px;top:263.10px;font-size:7.8px;font-weight:bold;color:#2a2a2a">M-File Size:</div>
<div class="a" style="left:1113.7px;top:274.4px;width:243px;height:1px;background:#e6e4e6"></div><div class="a" style="left:1113.7px;top:290.4px;width:243px;height:1px;background:#d6d4d6"></div>
<div class="t" style="right:247.8px;top:279.90px;font-size:7.8px;font-weight:bold;color:#2a2a2a">M-File Extension:</div>
<div class="t" style="left:1117.9px;top:279.90px;font-size:7.8px;color:#2a2a2a">HTM</div>
<div class="a" style="left:1113.7px;top:291.9px;width:243px;height:1px;background:#e6e4e6"></div><div class="a" style="left:1113.7px;top:307.9px;width:243px;height:1px;background:#d6d4d6"></div>
<div class="t" style="right:247.8px;top:297.60px;font-size:7.8px;font-weight:bold;color:#2a2a2a">M-File Path:</div>
<div class="t" style="left:1117.9px;top:297.80px;font-size:7.8px;color:#2a2a2a">.\VOL01\NATIVES\NATIVE001\CHAT-B00001-00001-00001.HTM</div>
<div class="a" style="left:1113.7px;top:309.6px;width:243px;height:1px;background:#e6e4e6"></div><div class="a" style="left:1113.7px;top:325.6px;width:243px;height:1px;background:#d6d4d6"></div>
<div class="t" style="right:247.8px;top:315.40px;font-size:7.8px;font-weight:bold;color:#2a2a2a">Relativity Native Type:</div>
<div class="t" style="left:1117.9px;top:315.40px;font-size:7.8px;color:#2a2a2a">Internet HTML</div>
<div class="a" style="left:1018.3px;top:337px;width:340px;height:121px;background:#f0eef0;border:1px solid #d2d0d2;border-bottom:2px solid #cfcdcf;border-radius:3px"></div>
<div class="t" style="left:1022px;top:340.70px;font-size:8.4px;font-weight:bold;color:#3b66ac">Email Metadata</div>
<div class="a" style="left:1085.6px;top:350px;width:271px;height:1px;background:#e6e4e6"></div><div class="a" style="left:1085.6px;top:366px;width:271px;height:1px;background:#d6d4d6"></div>
<div class="t" style="right:277.0px;top:356.40px;font-size:7.8px;font-weight:bold;color:#2a2a2a">M-Email From:</div>
<div class="a" style="left:1085.6px;top:367px;width:271px;height:1px;background:#e6e4e6"></div><div class="a" style="left:1085.6px;top:383px;width:271px;height:1px;background:#d6d4d6"></div>
<div class="t" style="right:277.0px;top:373.20px;font-size:7.8px;font-weight:bold;color:#2a2a2a">M-Email To:</div>
<div class="a" style="left:1085.6px;top:384.2px;width:271px;height:1px;background:#e6e4e6"></div><div class="a" style="left:1085.6px;top:400.2px;width:271px;height:1px;background:#d6d4d6"></div>
<div class="t" style="right:277.0px;top:390.00px;font-size:7.8px;font-weight:bold;color:#2a2a2a">M-Email CC:</div>
<div class="a" style="left:1085.6px;top:401px;width:271px;height:1px;background:#e6e4e6"></div><div class="a" style="left:1085.6px;top:417px;width:271px;height:1px;background:#d6d4d6"></div>
<div class="t" style="right:277.0px;top:406.90px;font-size:7.8px;font-weight:bold;color:#2a2a2a">M-Email BCC:</div>
<div class="a" style="left:1085.6px;top:418.2px;width:271px;height:1px;background:#e6e4e6"></div><div class="a" style="left:1085.6px;top:434.2px;width:271px;height:1px;background:#d6d4d6"></div>
<div class="t" style="right:277.0px;top:423.90px;font-size:7.8px;font-weight:bold;color:#2a2a2a">M-Date Sent:</div>
<div class="a" style="left:1085.6px;top:435px;width:271px;height:1px;background:#e6e4e6"></div><div class="a" style="left:1085.6px;top:451px;width:271px;height:1px;background:#d6d4d6"></div>
<div class="t" style="right:277.0px;top:440.70px;font-size:7.8px;font-weight:bold;color:#2a2a2a">M-Subject:</div>
<div class="a" style="left:1018.3px;top:463px;width:340px;height:69px;background:#f0eef0;border:1px solid #d2d0d2;border-bottom:2px solid #cfcdcf;border-radius:3px"></div>
<div class="t" style="left:1022px;top:466.20px;font-size:8.4px;font-weight:bold;color:#3b66ac">Document Metadata</div>
<div class="a" style="left:1112px;top:475px;width:75px;height:1px;background:#e6e4e6"></div><div class="a" style="left:1112px;top:491px;width:75px;height:1px;background:#d6d4d6"></div>
<div class="t" style="right:249.7px;top:481.50px;font-size:7.8px;font-weight:bold;color:#2a2a2a">M-Author:</div>
<div class="a" style="left:1287px;top:475px;width:69px;height:1px;background:#e6e4e6"></div><div class="a" style="left:1287px;top:491px;width:69px;height:1px;background:#d6d4d6"></div>
<div class="t" style="right:74.8px;top:481.50px;font-size:7.8px;font-weight:bold;color:#2a2a2a">M-Document Category:</div>
<div class="a" style="left:1112px;top:491.9px;width:75px;height:1px;background:#e6e4e6"></div><div class="a" style="left:1112px;top:507.9px;width:75px;height:1px;background:#d6d4d6"></div>
<div class="t" style="right:249.7px;top:498.40px;font-size:7.8px;font-weight:bold;color:#2a2a2a">M-Date Created:</div>
<div class="a" style="left:1287px;top:491.9px;width:69px;height:1px;background:#e6e4e6"></div><div class="a" style="left:1287px;top:507.9px;width:69px;height:1px;background:#d6d4d6"></div>
<div class="t" style="right:74.8px;top:498.40px;font-size:7.8px;font-weight:bold;color:#2a2a2a">M-Last Author:</div>
<div class="a" style="left:1112px;top:508.70000000000005px;width:75px;height:1px;background:#e6e4e6"></div><div class="a" style="left:1112px;top:524.7px;width:75px;height:1px;background:#d6d4d6"></div>
<div class="t" style="right:249.7px;top:515.50px;font-size:7.8px;font-weight:bold;color:#2a2a2a">M-Date Last Modified:</div>
<div class="a" style="left:1287px;top:508.70000000000005px;width:69px;height:1px;background:#e6e4e6"></div><div class="a" style="left:1287px;top:524.7px;width:69px;height:1px;background:#d6d4d6"></div>
<div class="t" style="right:74.8px;top:515.50px;font-size:7.8px;font-weight:bold;color:#2a2a2a">M-Title:</div>
<div class="a" style="left:1355px;top:75px;width:1px;height:639px;background:#f4f2f4"></div>
<div class="a" style="left:1024px;top:657px;width:332px;height:12px;background:#efedef"></div>
<div class="a" style="left:1039.7px;top:658.5px;width:288.3px;height:10px;background:#c9c7c9"></div>
<svg class="a" style="left:1025px;top:658px" width="10" height="11" viewBox="0 0 10 11"><path d="M7 1.5 L3 5.5 L7 9.5" stroke="#333" stroke-width="1.5" fill="none"/></svg>
<svg class="a" style="left:1338.5px;top:658px" width="10" height="11" viewBox="0 0 10 11"><path d="M3 1.5 L7 5.5 L3 9.5" stroke="#333" stroke-width="1.5" fill="none"/></svg>
<div class="a" style="left:1016px;top:670px;width:340px;height:1px;background:#dedcde"></div>
<div class="a" style="left:1016.8px;top:672px;width:25.9px;height:16px;background:#1258a8;border-radius:2px"></div>
<div class="t" style="left:1022px;top:676.1px;font-size:8px;font-weight:bold;color:#e8f0fa">Edit</div>
<div class="a" style="left:1016px;top:690px;width:340px;height:1px;background:#d6d4d6"></div>
<div class="a" style="left:1009.5px;top:381.0px;width:1px;height:1px;background:#b8b8b8"></div><div class="a" style="left:1012.5px;top:381.0px;width:1px;height:1px;background:#b8b8b8"></div><div class="a" style="left:1009.5px;top:383.9px;width:1px;height:1px;background:#b8b8b8"></div><div class="a" style="left:1012.5px;top:383.9px;width:1px;height:1px;background:#b8b8b8"></div><div class="a" style="left:1009.5px;top:386.8px;width:1px;height:1px;background:#b8b8b8"></div><div class="a" style="left:1012.5px;top:386.8px;width:1px;height:1px;background:#b8b8b8"></div><div class="a" style="left:1009.5px;top:389.7px;width:1px;height:1px;background:#b8b8b8"></div><div class="a" style="left:1012.5px;top:389.7px;width:1px;height:1px;background:#b8b8b8"></div><div class="a" style="left:1009.5px;top:392.6px;width:1px;height:1px;background:#b8b8b8"></div><div class="a" style="left:1012.5px;top:392.6px;width:1px;height:1px;background:#b8b8b8"></div><div class="a" style="left:1009.5px;top:395.5px;width:1px;height:1px;background:#b8b8b8"></div><div class="a" style="left:1012.5px;top:395.5px;width:1px;height:1px;background:#b8b8b8"></div><div class="a" style="left:1009.5px;top:398.4px;width:1px;height:1px;background:#b8b8b8"></div><div class="a" style="left:1012.5px;top:398.4px;width:1px;height:1px;background:#b8b8b8"></div><div class="a" style="left:1009.5px;top:401.3px;width:1px;height:1px;background:#b8b8b8"></div><div class="a" style="left:1012.5px;top:401.3px;width:1px;height:1px;background:#b8b8b8"></div><div class="a" style="left:1009.5px;top:404.2px;width:1px;height:1px;background:#b8b8b8"></div><div class="a" style="left:1012.5px;top:404.2px;width:1px;height:1px;background:#b8b8b8"></div><div class="a" style="left:1009.5px;top:407.1px;width:1px;height:1px;background:#b8b8b8"></div><div class="a" style="left:1012.5px;top:407.1px;width:1px;height:1px;background:#b8b8b8"></div><div class="a" style="left:1009.5px;top:410.0px;width:1px;height:1px;background:#b8b8b8"></div><div class="a" style="left:1012.5px;top:410.0px;width:1px;height:1px;background:#b8b8b8"></div>
<!--RIGHT-->

<!-- bottom-right icon row -->
<div class="a" style="left:1161.4px;top:701.4px;width:1.2px;height:1.2px;background:#333"></div>
<div class="a" style="left:1178.3px;top:701.4px;width:1.2px;height:1.2px;background:#333"></div>
<div class="a" style="left:1212.5px;top:701.4px;width:1.2px;height:1.2px;background:#333"></div>
<div class="a" style="left:1229.4px;top:701.4px;width:1.2px;height:1.2px;background:#333"></div>
<svg class="a" style="left:1190px;top:696px" width="166" height="12" viewBox="0 0 166 12">
<rect x="0.8" y="1.2" width="10" height="9" rx="1.5" fill="#dfe8f4" stroke="#2a5aa0" stroke-width="1.3"/><path d="M3 8 L5 4.5 L7 7 L8.5 5 L9.5 8" stroke="#2a5aa0" stroke-width="0.9" fill="none"/>
<rect x="51" y="0.8" width="11" height="10.4" rx="1.5" fill="#1f4a8a"/><rect x="54" y="3" width="5" height="2.3" fill="#fff"/><rect x="54" y="6.3" width="5" height="3" fill="#fff"/>
<rect x="68.5" y="1" width="7" height="8" rx="1" fill="#dfe8f4" stroke="#2a5aa0" stroke-width="1.1"/><rect x="72" y="3" width="7" height="8" rx="1" fill="#dfe8f4" stroke="#2a5aa0" stroke-width="1.1"/>
<rect x="85.5" y="1.5" width="10" height="8" fill="#eef2f8" stroke="#2a4a80" stroke-width="1.1"/><path d="M87 8 L90 5 L92 7 L95 4" stroke="#2a4a80" stroke-width="0.9" fill="none"/><path d="M93 9 H97 M95 7 V11" stroke="#2a4a80" stroke-width="1.2"/>
<path d="M104 6 A4.5 4.5 0 1 0 108 1.5" stroke="#1f3a6a" stroke-width="1.5" fill="none"/><path d="M102 3.5 L104.5 6.5 L106.5 3" fill="#1f3a6a"/><path d="M107.5 3.5 V6 L109 7.5" stroke="#1f3a6a" stroke-width="1" fill="none"/>
<rect x="119.5" y="0.8" width="9.5" height="10.4" rx="2" fill="#dfe8f4" stroke="#1f4a8a" stroke-width="1.4"/><path d="M121.5 4.3 H127 M121.5 7.5 H127" stroke="#1f4a8a" stroke-width="1.1"/>
<rect x="136" y="3.5" width="6" height="5" rx="2.5" fill="none" stroke="#1f4aa0" stroke-width="1.8"/><rect x="141.5" y="3.5" width="6" height="5" rx="2.5" fill="none" stroke="#1f4aa0" stroke-width="1.8"/>
<path d="M155.5 3 H164.5 L163 11.5 H157 Z" fill="#2a5ab0"/><ellipse cx="160" cy="3" rx="4.5" ry="1.6" fill="#6a9ae0"/><path d="M152 6 L156 4.5 L156 7.5 Z" fill="#2a5ab0"/>
</svg>
<!-- taskbar -->
<div class="a" style="left:0;top:714px;width:1356px;height:23px;background:linear-gradient(#6f7888 0,#6f7888 1px,#8e99b0 1px,#8e99b0 3px,#8291aa 5px,#7f8eab 19px,#8a94ae 21px,#a2acc2 22px,#a2acc2 23px)"></div>
<div class="a" style="left:0;top:737px;width:1356px;height:1px;background:#5e6250"></div>
<!-- start orb -->
<div class="a" style="left:14.2px;top:708.2px;width:29.4px;height:29.4px;border-radius:50%;background:radial-gradient(circle at 50% 75%,#50d0f8 0,#1a80c8 45%,#0a3a70 100%);box-shadow:0 0 0 1px #2a4060"></div><div class="a" style="left:18px;top:709.5px;width:22px;height:11px;border-radius:11px 11px 6px 6px;background:linear-gradient(rgba(255,255,255,0.45),rgba(255,255,255,0.05))"></div>
<svg class="a" style="left:20px;top:713px" width="18" height="19" viewBox="0 0 18 19"><g stroke="#0a3058" stroke-width="0.6"><path d="M1.5 3.5 Q5 1.5 8.3 3 L8 8.8 Q4.8 7.6 1.2 9.2 Z" fill="#f0601a"/><path d="M9.3 3.2 Q12.8 4.6 16.8 2.8 L16.4 8.4 Q12.6 10.2 9 8.9 Z" fill="#70c030"/><path d="M1.1 10.2 Q4.7 8.6 8 9.8 L7.7 15.6 Q4.4 14.3 0.8 16 Z" fill="#38b0f0"/><path d="M9 9.9 Q12.6 11.2 16.3 9.4 L15.9 15.2 Q12.2 17 8.7 15.7 Z" fill="#f8c428"/></g></svg>
<div class="a" style="left:56px;top:715px;width:32.8px;height:22px;border:1px solid #4e586c;border-radius:2px;background:linear-gradient(#a4afc2,#8e9bb2);box-shadow:inset 0 0 0 1px rgba(255,255,255,0.35)"></div>
<div class="a" style="left:91.2px;top:715px;width:32.8px;height:22px;border:1px solid #4e586c;border-radius:2px;background:linear-gradient(#a4afc2,#8e9bb2);box-shadow:inset 0 0 0 1px rgba(255,255,255,0.35)"></div>
<div class="a" style="left:267.5px;top:715px;width:32.7px;height:22px;border:1px solid #4e586c;border-radius:2px;background:linear-gradient(#a4afc2,#8e9bb2);box-shadow:inset 0 0 0 1px rgba(255,255,255,0.35)"></div>
<div class="a" style="left:373.4px;top:715px;width:32.1px;height:22px;border:1px solid #4e586c;border-radius:2px;background:linear-gradient(#c4ccda,#aab4c6);box-shadow:inset 0 0 0 1px rgba(255,255,255,0.35)"></div>
<div class="a" style="left:443.9px;top:715px;width:32.3px;height:22px;border:1px solid #4e586c;border-radius:2px;background:linear-gradient(#a4afc2,#8e9bb2);box-shadow:inset 0 0 0 1px rgba(255,255,255,0.35)"></div>
<div class="a" style="left:478.7px;top:715px;width:32.3px;height:22px;border:1px solid #4e586c;border-radius:2px;background:linear-gradient(#a4afc2,#8e9bb2);box-shadow:inset 0 0 0 1px rgba(255,255,255,0.35)"></div>
<svg class="a" style="left:64px;top:718px" width="16" height="15" viewBox="0 0 16 15"><path d="M1 3 H6 L7.5 4.5 H15 V13.5 H1 Z" fill="#f0d878"/><rect x="1" y="6" width="14" height="7.5" fill="#f8e8a0"/><rect x="3" y="8" width="10" height="2" fill="#9ad0f0"/></svg>
<svg class="a" style="left:99px;top:718px" width="16" height="16" viewBox="0 0 16 16"><rect x="5" y="2" width="10" height="12" fill="#f8e0a0" stroke="#e0a040" stroke-width="0.8"/><rect x="1" y="3.5" width="8" height="9" fill="#f0a020"/><circle cx="5" cy="8" r="2.5" fill="none" stroke="#fff" stroke-width="1.5"/></svg>
<svg class="a" style="left:135px;top:719px" width="15" height="14" viewBox="0 0 15 14"><path d="M3 2 L12 1 L11 12 L2 13 Z" fill="#9ad0e0"/><path d="M3 2 L12 1 L11 5 L2 6 Z" fill="#d8f0f8"/></svg>
<svg class="a" style="left:170px;top:718px" width="16" height="15" viewBox="0 0 16 15"><rect x="4" y="1" width="11" height="13" fill="#e8f4e0" stroke="#60a050" stroke-width="0.8"/><rect x="1" y="2.5" width="9" height="9" fill="#2a8a3a"/><path d="M3 4 L8 10 M8 4 L3 10" stroke="#fff" stroke-width="1.5"/></svg>
<svg class="a" style="left:205px;top:718px" width="16" height="15" viewBox="0 0 16 15"><rect x="4" y="2" width="11" height="12" fill="#f0f4fa" stroke="#5a7ab0" stroke-width="0.8"/><rect x="1" y="2.5" width="10" height="9" fill="#1f4aa0"/><path d="M2.5 4 L4 10 L6 6 L8 10 L9.5 4" stroke="#fff" stroke-width="1.2" fill="none"/></svg>
<div class="t" style="left:240px;top:719.5px;font-size:11px;font-weight:bold;font-style:italic;color:#0a3a6a;letter-spacing:-0.5px">XI</div>
<svg class="a" style="left:275px;top:718px" width="16" height="15" viewBox="0 0 16 15"><rect x="4" y="1" width="11" height="13" fill="#fae8e0" stroke="#d06040" stroke-width="0.8"/><rect x="1" y="2.5" width="9" height="9" fill="#d04a20"/><path d="M3.5 10 V4 H6 A1.8 1.8 0 0 1 6 7.5 H3.5" stroke="#fff" stroke-width="1.3" fill="none"/></svg>
<div class="a" style="left:311px;top:718px;width:16px;height:16px;border-radius:50%;background:conic-gradient(from -60deg,#e03a2a 0 33%,#f8c020 33% 66%,#2a9a4a 66% 100%)"></div>
<div class="a" style="left:315.5px;top:722.5px;width:7px;height:7px;border-radius:50%;background:#3a7ae0;border:1.2px solid #fff"></div>
<div class="a" style="left:346px;top:718px;width:16px;height:16px;background:#4a0a10;border:1px solid #8a1a20"></div>
<svg class="a" style="left:348px;top:720px" width="12" height="12" viewBox="0 0 12 12"><path d="M2 10 Q6 1 6 2 Q6 1 10 10 M3 7 Q6 5 9 7" stroke="#e02020" stroke-width="1.2" fill="none"/></svg>
<svg class="a" style="left:381px;top:717px" width="18" height="18" viewBox="0 0 17 17"><circle cx="8.5" cy="9" r="6" fill="none" stroke="#30a8e0" stroke-width="2.6"/><path d="M3 9.2 H14" stroke="#30a8e0" stroke-width="2"/><path d="M9 9.5 H15" stroke="#b8c2d4" stroke-width="2.5"/><path d="M2 15 Q5 4 15 2" stroke="#e8c040" stroke-width="1.4" fill="none"/></svg>
<div class="a" style="left:417px;top:718px;width:16px;height:16px;border-radius:3px;background:#2a6ab8"></div>
<div class="t" style="left:419.5px;top:717.5px;font-size:15px;font-weight:bold;color:#fff">S</div>
<div class="a" style="left:452px;top:718px;width:11px;height:15px;background:#1a5ab0"></div>
<div class="t" style="left:454px;top:720px;font-size:11px;font-weight:bold;color:#fff">L</div>
<svg class="a" style="left:461px;top:720px" width="8" height="11" viewBox="0 0 8 11"><path d="M1 2 Q6 2 6 5.5 Q6 9 1 9" stroke="#f0f4fa" stroke-width="1.6" fill="none"/></svg>
<div class="a" style="left:487px;top:718px;width:16px;height:16px;border-radius:50%;background:#18a0e0;border:1.5px solid #e0f4fc"></div>
<div class="t" style="left:491px;top:720px;font-size:11px;font-weight:bold;color:#fff">S</div>
<div class="a" style="left:1096px;top:716px;width:20px;height:21px;border-left:1.5px solid #a8b2c6;border-top:1px solid #98a4b8;border-radius:10px 0 0 0"></div>
<div class="a" style="left:1107px;top:719.5px;width:38.5px;height:16.5px;background:linear-gradient(#2aa84a,#0a7a2a);border:1px solid #cfe8d0;box-shadow:0 0 0 1px #2a3a2a"></div>
<div class="a" style="left:1145.5px;top:724.5px;width:3px;height:7px;background:#111"></div>
<div class="t" style="left:1115px;top:722.5px;font-size:10.5px;color:#fff">98%</div>
<svg class="a" style="left:1152px;top:721px" width="20" height="13" viewBox="0 0 20 13"><path d="M7 1.5 H13 V11.5 H7 A5 5 0 0 1 7 1.5 Z" fill="#111" stroke="#eee" stroke-width="1.2"/><path d="M13 4.5 H17.5 M13 8.5 H17.5" stroke="#f4f4f4" stroke-width="1.5"/><path d="M5 6.5 H9" stroke="#eee" stroke-width="1.2"/></svg>
<div class="a" style="left:1175.5px;top:715px;width:1px;height:22px;background:#5a6478"></div>
<svg class="a" style="left:1183px;top:723px" width="10" height="6" viewBox="0 0 10 6"><path d="M1 5 L5 1 L9 5 Z" fill="#e8eef6"/></svg>
<svg class="a" style="left:1204px;top:718px" width="16" height="17" viewBox="0 0 16 17"><path d="M2 2 V16" stroke="#eee" stroke-width="1.4"/><path d="M2.5 2 H11 L9 5 L11 8 H2.5 Z" fill="#f4f4f4"/><circle cx="11" cy="12" r="3.8" fill="#e02a2a"/><path d="M9.2 10.2 L12.8 13.8 M12.8 10.2 L9.2 13.8" stroke="#fff" stroke-width="1.2"/></svg>
<svg class="a" style="left:1224px;top:718px" width="16" height="17" viewBox="0 0 16 17"><rect x="2" y="3" width="8" height="13" fill="#f4f4f4" stroke="#555" stroke-width="0.8"/><rect x="4" y="1.5" width="4" height="2" fill="#f4f4f4"/><path d="M12 2 V6 M14 2 V6 M11 6 H15 V8 Q13 11 13 13" stroke="#eee" stroke-width="1.1" fill="none"/></svg>
<svg class="a" style="left:1247px;top:720px" width="12" height="13" viewBox="0 0 12 13"><path d="M1 12 V10 M3.5 12 V8 M6 12 V6 M8.5 12 V4 M11 12 V2" stroke="#e4eaf2" stroke-width="1.6"/></svg>
<svg class="a" style="left:1267px;top:718px" width="17" height="17" viewBox="0 0 17 17"><path d="M1 6 H4 L8 2 V15 L4 11 H1 Z" fill="#f0f0f0"/><path d="M10 5 Q12.5 8.5 10 12 M12.5 3 Q16 8.5 12.5 14" stroke="#e8eef6" stroke-width="1.2" fill="none"/></svg>
<div class="t" style="left:1300.5px;top:721.5px;font-size:10.5px;color:#e8eef6">2:11 PM</div>
<div class="a" style="left:1349.5px;top:715px;width:1px;height:22px;background:#5a6478"></div>
<div class="a" style="left:1350.5px;top:715px;width:5.5px;height:22px;background:linear-gradient(#7a8aa0,#5a6a80)"></div>
<!--TASKBAR-->
</div>
</body></html>
